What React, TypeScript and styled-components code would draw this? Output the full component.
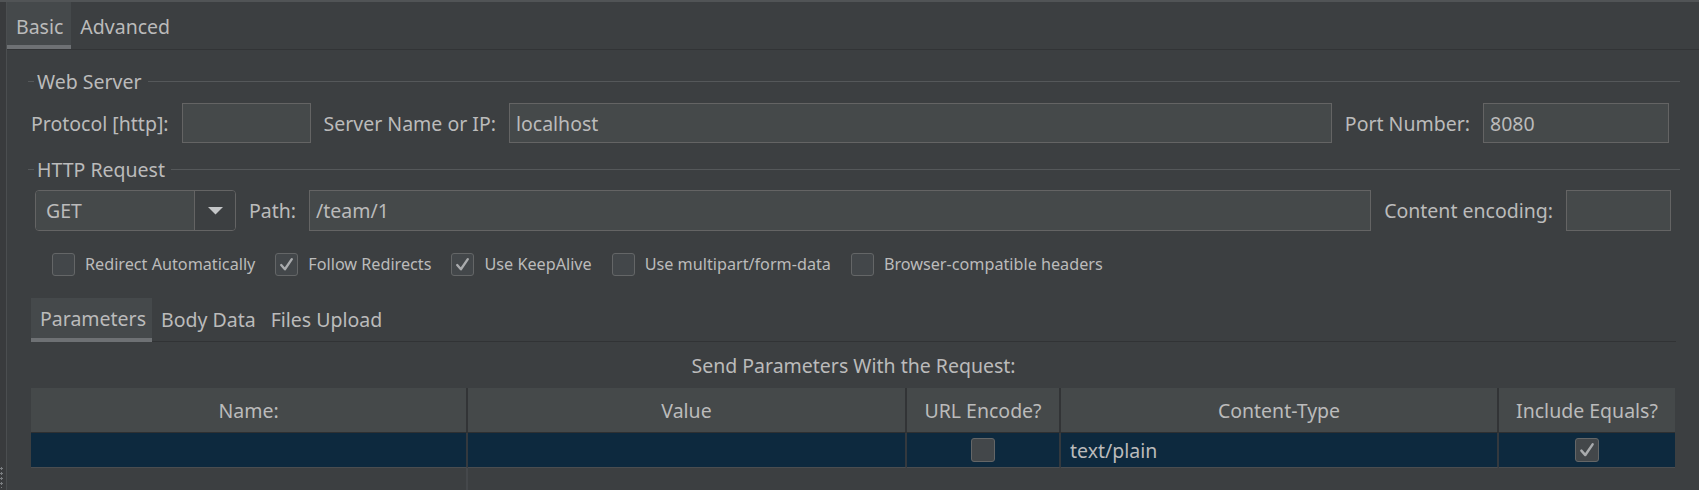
import styled, { createGlobalStyle } from "styled-components";

const GlobalStyle = createGlobalStyle`
  html, body {
    margin: 0;
    padding: 0;
    background: #3c3f41;
  }
`;

const Window = styled.div`
  width: 1699px;
  height: 490px;
  box-sizing: border-box;
  background: #3c3f41;
  color: #bbbbbb;
  font-family: "Noto Sans", "Open Sans", sans-serif;
  font-size: 19.5px;
  border-top: 2px solid #515456;
  display: flex;
  overflow: hidden;
  position: relative;
`;

const Gutter = styled.div`
  width: 6px;
  flex: none;
  background: #393b3d;
`;

const Grip = styled.div`
  position: absolute;
  left: 0;
  bottom: 2px;
  width: 3px;
  height: 22px;
  background-image: radial-gradient(circle, #7a7d80 1px, transparent 1.3px);
  background-size: 3px 5px;
`;

const Pane = styled.div`
  flex: 1;
  min-width: 0;
  display: flex;
  flex-direction: column;
  border-left: 1px solid #4b4e50;
`;

const TabBar = styled.div`
  display: flex;
  height: 47px;
  flex: none;
  border-bottom: 1px solid #323436;
`;

const Tab = styled.div<{ $active?: boolean }>`
  display: flex;
  align-items: center;
  box-sizing: border-box;
  height: ${(p) => (p.$active ? "47px" : "43px")};
  padding: 5px 8px 0 9px;
  line-height: 27px;
  background: ${(p) => (p.$active ? "#45494b" : "transparent")};
  border-bottom: ${(p) => (p.$active ? "4px solid #6e7174" : "none")};
`;

const Content = styled.div`
  flex: 1;
  display: flex;
  flex-direction: column;
  padding: 18px 19px 0 21px;
  line-height: 27px;
`;

const Title = styled.div<{ $top: number }>`
  display: flex;
  align-items: center;
  gap: 3px;
  height: 27px;
  margin-top: ${(p) => p.$top}px;
  white-space: nowrap;

  &::before {
    content: "";
    width: 6px;
    height: 1px;
    background: #55585a;
  }
  &::after {
    content: "";
    flex: 1;
    height: 1px;
    margin-left: 3px;
    background: #55585a;
  }
`;

const Row = styled.div<{ $top: number; $left: number; $right: number; $h: number }>`
  display: flex;
  align-items: center;
  gap: 13px;
  height: ${(p) => p.$h}px;
  margin: ${(p) => p.$top}px ${(p) => p.$right}px 0 ${(p) => p.$left}px;
`;

const Label = styled.span`
  white-space: nowrap;
  flex: none;
`;

const Input = styled.div<{ $w?: number }>`
  box-sizing: border-box;
  height: 100%;
  ${(p) => (p.$w ? `width: ${p.$w}px; flex: none;` : "flex: 1;")}
  background: #45494a;
  border: 1px solid #646464;
  padding: 0 6px;
  display: flex;
  align-items: center;
  white-space: nowrap;
`;

const Combo = styled.div`
  box-sizing: border-box;
  width: 201px;
  height: 100%;
  flex: none;
  display: flex;
  border: 1px solid #646464;
  border-radius: 4px;
  overflow: hidden;
`;

const ComboValue = styled.div`
  flex: 1;
  background: #45494a;
  display: flex;
  align-items: center;
  padding-left: 10px;
`;

const ComboArrow = styled.div`
  width: 40px;
  flex: none;
  border-left: 1px solid #646464;
  background: #3c3f41;
  display: flex;
  align-items: center;
  justify-content: center;
`;

const CheckRow = styled.div`
  display: flex;
  align-items: center;
  height: 23px;
  margin: 22px 0 0 24px;
  font-size: 16.2px;
`;

const CheckItem = styled.label`
  display: flex;
  align-items: center;
  gap: 10px;
  margin-right: 20px;
  white-space: nowrap;
`;

const Box = styled.span<{ $size: number }>`
  box-sizing: border-box;
  width: ${(p) => p.$size}px;
  height: ${(p) => p.$size}px;
  flex: none;
  border: 1px solid #646667;
  border-radius: 3px;
  background: #43474a;
  display: flex;
  align-items: center;
  justify-content: center;
`;

const Params = styled.div`
  flex: 1;
  display: flex;
  flex-direction: column;
  margin: 22px 4px 0 3px;
`;

const SubTabBar = styled.div`
  display: flex;
  height: 43px;
  flex: none;
  border-bottom: 1px solid #313335;
`;

const SubTab = styled.div<{ $active?: boolean }>`
  display: flex;
  align-items: center;
  box-sizing: border-box;
  height: ${(p) => (p.$active ? "44px" : "43px")};
  padding: 0 6px 0 9px;
  background: ${(p) => (p.$active ? "#45494b" : "transparent")};
  border-bottom: ${(p) => (p.$active ? "4px solid #6e7174" : "none")};
  white-space: nowrap;
`;

const Caption = styled.div`
  text-align: center;
  margin-top: 10px;
  height: 27px;
`;

const Table = styled.div`
  flex: 1;
  display: flex;
  flex-direction: column;
  margin-top: 9px;
`;

const cols = "437px 439px 154px 438px 176px";

const HeadRow = styled.div`
  display: grid;
  grid-template-columns: ${cols};
  height: 45px;
  flex: none;
`;

const HeadCell = styled.div<{ $last?: boolean }>`
  box-sizing: border-box;
  background: #45494a;
  border-right: ${(p) => (p.$last ? "none" : "2px solid #323436")};
  border-bottom: 1px solid #2e3032;
  display: flex;
  align-items: center;
  justify-content: center;
  white-space: nowrap;
`;

const DataRow = styled.div`
  display: grid;
  grid-template-columns: ${cols};
  height: 35px;
  flex: none;
`;

const DataCell = styled.div<{ $last?: boolean; $align?: string }>`
  box-sizing: border-box;
  background: #0d293e;
  border-right: ${(p) => (p.$last ? "none" : "2px solid #34393e")};
  border-bottom: 1px solid #4a4d50;
  display: flex;
  align-items: center;
  justify-content: ${(p) => p.$align || "flex-start"};
  padding-left: ${(p) => (p.$align ? "0" : "9px")};
  white-space: nowrap;
`;

const FillRow = styled.div`
  flex: 1;
  display: grid;
  grid-template-columns: ${cols};
`;

const FillCell = styled.div<{ $line?: boolean }>`
  border-right: ${(p) => (p.$line ? "2px solid #45484b" : "none")};
`;

function Check({ on, size = 23 }: { on?: boolean; size?: number }) {
  return (
    <Box $size={size}>
      {on && (
        <svg width={size - 6} height={size - 6} viewBox="0 0 16 16">
          <polyline
            points="3,8.5 6.5,12.5 13,3"
            fill="none"
            stroke="#a9abad"
            strokeWidth="2.2"
            strokeLinecap="round"
            strokeLinejoin="round"
          />
        </svg>
      )}
    </Box>
  );
}

const options = [
  { label: "Redirect Automatically", on: false },
  { label: "Follow Redirects", on: true },
  { label: "Use KeepAlive", on: true },
  { label: "Use multipart/form-data", on: false },
  { label: "Browser-compatible headers", on: false },
];

const headers = ["Name:", "Value", "URL Encode?", "Content-Type", "Include Equals?"];

export default function App() {
  return (
    <>
      <GlobalStyle />
      <Window>
        <Gutter />
        <Grip />
        <Pane>
          <TabBar>
            <Tab $active>Basic</Tab>
            <Tab>Advanced</Tab>
          </TabBar>
          <Content>
            <Title $top={0}>Web Server</Title>
            <Row $top={8} $left={3} $right={11} $h={40}>
              <Label>Protocol [http]:</Label>
              <Input $w={129} />
              <Label>Server Name or IP:</Label>
              <Input>localhost</Input>
              <Label>Port Number:</Label>
              <Input $w={186}>8080</Input>
            </Row>

            <Title $top={13}>HTTP Request</Title>
            <Row $top={7} $left={7} $right={9} $h={41}>
              <Combo>
                <ComboValue>GET</ComboValue>
                <ComboArrow>
                  <svg width="15" height="8" viewBox="0 0 15 8">
                    <polygon points="0,0 15,0 7.5,7.5" fill="#c4c6c8" />
                  </svg>
                </ComboArrow>
              </Combo>
              <Label>Path:</Label>
              <Input>/team/1</Input>
              <Label>Content encoding:</Label>
              <Input $w={105} />
            </Row>

            <CheckRow>
              {options.map((o) => (
                <CheckItem key={o.label}>
                  <Check on={o.on} />
                  {o.label}
                </CheckItem>
              ))}
            </CheckRow>

            <Params>
              <SubTabBar>
                <SubTab $active>Parameters</SubTab>
                <SubTab>Body Data</SubTab>
                <SubTab>Files Upload</SubTab>
              </SubTabBar>
              <Caption>Send Parameters With the Request:</Caption>
              <Table>
                <HeadRow>
                  {headers.map((h, i) => (
                    <HeadCell key={h} $last={i === headers.length - 1}>
                      {h}
                    </HeadCell>
                  ))}
                </HeadRow>
                <DataRow>
                  <DataCell />
                  <DataCell />
                  <DataCell $align="center">
                    <Check size={24} />
                  </DataCell>
                  <DataCell>text/plain</DataCell>
                  <DataCell $last $align="center">
                    <Check on size={24} />
                  </DataCell>
                </DataRow>
                <FillRow>
                  <FillCell $line />
                  <FillCell />
                  <FillCell />
                  <FillCell />
                  <FillCell />
                </FillRow>
              </Table>
            </Params>
          </Content>
        </Pane>
      </Window>
    </>
  );
}
